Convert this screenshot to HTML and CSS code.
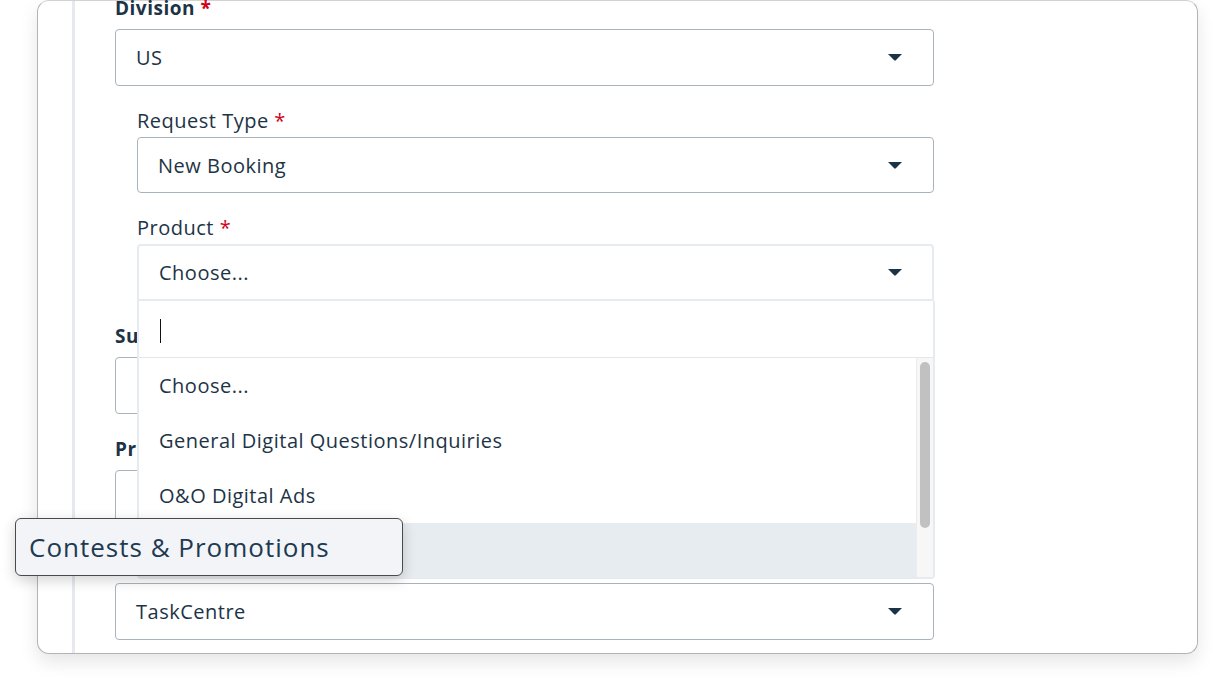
FILE: index.html
```html
<!DOCTYPE html>
<html lang="en">
<head>
<meta charset="utf-8">
<title>Request form</title>
<link rel="stylesheet" href="styles.css">
</head>
<body>
<div class="page">
  <div class="card">
    <div class="rail"></div>
    <div class="content">
      <div class="field">
        <label class="label label-bold">Division <span class="req">*</span></label>
        <div class="select"><span class="value">US</span><svg class="caret" width="14" height="7" viewBox="0 0 14 7"><path d="M0 0H14L7.8 6.3Q7 7 6.2 6.3Z"/></svg></div>
      </div>
      <div class="nested">
        <div class="field">
          <label class="label">Request Type <span class="req">*</span></label>
          <div class="select"><span class="value">New Booking</span><svg class="caret" width="14" height="7" viewBox="0 0 14 7"><path d="M0 0H14L7.8 6.3Q7 7 6.2 6.3Z"/></svg></div>
        </div>
        <div class="field field-open">
          <label class="label">Product <span class="req">*</span></label>
          <div class="select select-open"><span class="value">Choose...</span><svg class="caret" width="14" height="7" viewBox="0 0 14 7"><path d="M0 0H14L7.8 6.3Q7 7 6.2 6.3Z"/></svg></div>
          <div class="dropdown">
            <div class="search"><span class="cursor"></span></div>
            <div class="list">
              <ul class="options">
                <li class="option">Choose...</li>
                <li class="option">General Digital Questions/Inquiries</li>
                <li class="option">O&amp;O Digital Ads</li>
                <li class="option option-active">Contests &amp; Promotions</li>
              </ul>
              <div class="scrollbar"><div class="thumb"></div></div>
            </div>
          </div>
        </div>
      </div>
      <div class="field">
        <label class="label label-bold">Subject <span class="req">*</span></label>
        <div class="input"></div>
      </div>
      <div class="field">
        <label class="label label-bold">Preferred Contact <span class="req">*</span></label>
        <div class="input"></div>
      </div>
      <div class="field">
        <label class="label label-bold">System <span class="req">*</span></label>
        <div class="select"><span class="value">TaskCentre</span><svg class="caret" width="14" height="7" viewBox="0 0 14 7"><path d="M0 0H14L7.8 6.3Q7 7 6.2 6.3Z"/></svg></div>
      </div>
    </div>
  </div>
  <div class="tooltip">Contests &amp; Promotions</div>
</div>
</body>
</html>
```
FILE: styles.css
```css
* { box-sizing: border-box; }
html, body { margin: 0; padding: 0; background: #ffffff; }
body {
  font-family: "Open Sans", "Noto Sans", sans-serif;
  color: #1d3446;
  overflow: hidden;
  height: 684px;
}
.page { position: relative; padding-left: 37px; }
.card {
  display: flex;
  width: 1161px;
  height: 654px;
  border: 1px solid #b4b4b4;
  border-top-color: #d2d2d2;
  border-radius: 12px;
  box-shadow: 0 8px 18px rgba(0, 0, 0, 0.10);
  background: #fff;
}
.rail {
  margin-left: 34px;
  border-left: 3px solid #e6eaee;
}
.content {
  padding-left: 40px;
  width: 859px;
  margin-top: -4px;
}
.field { margin-bottom: 24px; position: relative; }
.label {
  display: block;
  font-size: 20px;
  letter-spacing: 0.5px;
  line-height: 22px;
  margin-bottom: 10px;
  color: #1d3446;
}
.label-bold { font-size: 19px; font-weight: 700; letter-spacing: 0.5px; }
.nested .label { margin-bottom: 5px; }
.req { color: #d0021b; }
.select, .input {
  height: 57px;
  border: 1px solid #a9b3bd;
  border-radius: 4px;
  display: flex;
  align-items: center;
  padding: 0 31px 0 20px;
  background: #fff;
}
.value { flex: 1; font-size: 20px; letter-spacing: 0.5px; }
.caret { fill: #1b3346; display: block; }
.nested { padding-left: 22px; }
.nested .select { height: 56px; }
.nested .select-open {
  height: 57px;
  border: 2px solid #e6ebf0;
  border-radius: 4px 4px 0 0;
  padding-left: 20px;
  padding-right: 30px;
}
.dropdown {
  position: absolute;
  left: 0;
  right: -1px;
  top: 100%;
  z-index: 5;
  background: #fff;
  border: 2px solid #e6ebf0;
  border-top: none;
  border-radius: 0 0 4px 4px;
}
.search {
  height: 57px;
  border-bottom: 1px solid #e6e6e6;
  padding: 18px 0 0 21px;
}
.cursor {
  display: block;
  width: 1px;
  height: 24px;
  background: #111;
}
.list { display: flex; height: 219px; overflow: hidden; }
.options { list-style: none; margin: 0; padding: 0; flex: 1; }
.option {
  height: 55px;
  display: flex;
  align-items: center;
  padding-left: 20px;
  font-size: 20px;
  letter-spacing: 0.5px;
}
.option-active { background: #e7ecf0; }
.scrollbar {
  width: 17px;
  background: #f7f7f7;
  border-left: 1px solid #ececec;
  padding: 4px 3px 0 3px;
}
.thumb {
  height: 166px;
  background: #c1c1c1;
  border-radius: 5px;
}
.tooltip {
  position: absolute;
  z-index: 10;
  left: 15px;
  top: 518px;
  width: 388px;
  height: 58px;
  background: #f2f4f8;
  border: 1px solid #4a4a4a;
  border-radius: 6px;
  box-shadow: 0 4px 14px rgba(0, 0, 0, 0.18);
  padding-left: 13px;
  display: flex;
  align-items: center;
  font-size: 26px;
  letter-spacing: 1px;
  color: #1d3a52;
  white-space: nowrap;
}
```
